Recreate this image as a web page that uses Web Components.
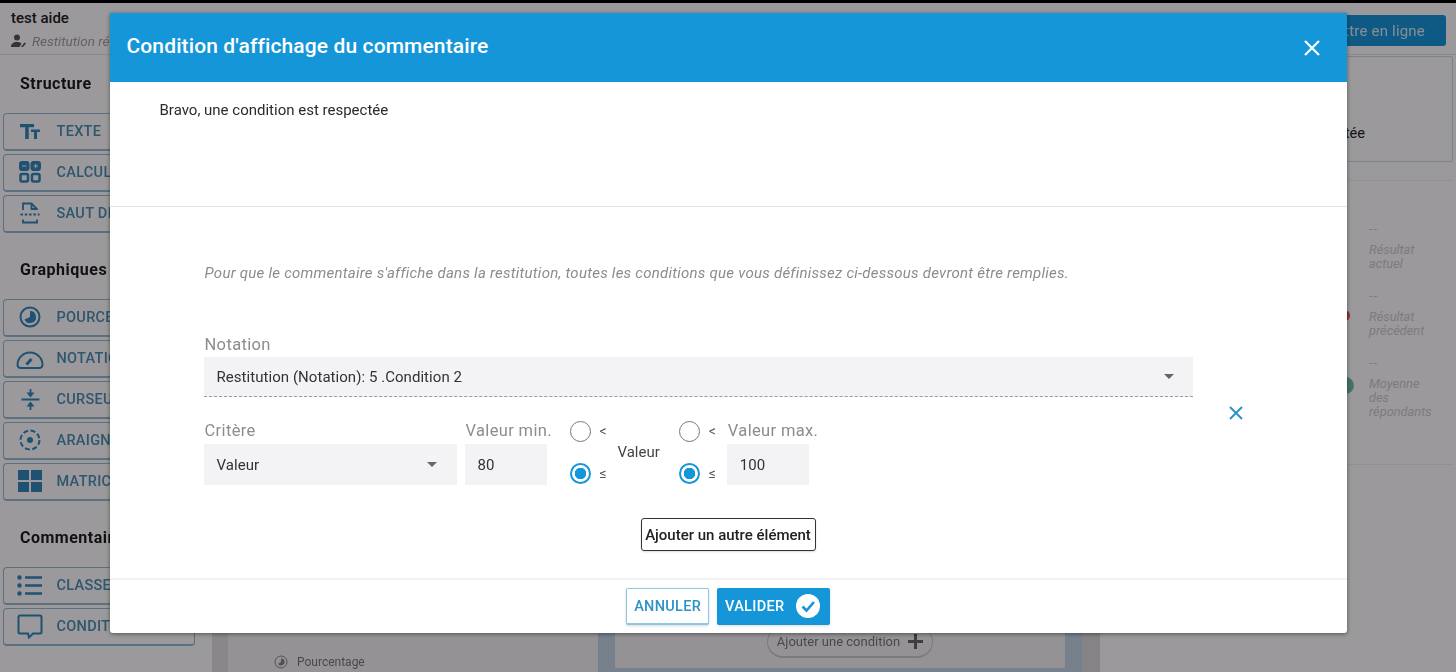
<!DOCTYPE html>
<html lang="fr">
<head>
<meta charset="utf-8">
<title>Condition d'affichage du commentaire</title>
<style>
  html, body { margin: 0; height: 100%; overflow: hidden; }
  body { font-family: Roboto, "Liberation Sans", sans-serif; color: #222; background: #fff; }
  svg[slot] { display: block; }
</style>
</head>
<body>

<app-shell>
  <app-header></app-header>
  <tool-sidebar slot="sidebar">
    <tool-group title="Structure">
      <tool-button label="TEXTE"><svg slot="icon" width="20" height="15" viewBox="0 0 20 15"><path fill="currentColor" d="M0 0h14v3.200H8.700V15H5.200V3.200H0zM11 5.500h9v2.500h-3v7h-3V8h-3z"/></svg></tool-button>
      <tool-button label="CALCUL"><svg slot="icon" width="22" height="22" viewBox="0 0 22 22" fill="none" stroke="currentColor"><rect x="0.500" y="0.500" width="9.500" height="9" rx="2" fill="currentColor"/><rect x="12" y="0.500" width="9.500" height="9" rx="2" fill="currentColor"/><rect x="1.500" y="13" width="7.500" height="7.500" rx="1.500" stroke-width="2.500"/><rect x="13" y="13" width="7.500" height="7.500" rx="1.500" stroke-width="2.500"/><path stroke="#fff" stroke-width="1" d="M3 5h4.500M14.500 5h4.500M16.700 2.700v4.600"/></svg></tool-button>
      <tool-button label="SAUT DE PAGE"><svg slot="icon" width="20" height="22" viewBox="0 0 20 22" fill="none" stroke="currentColor" stroke-width="1.800"><path d="M3 8V1.500h8.500L17 7v1M11.500 1.500V7H17M3 17.500v3h14v-3"/><path stroke-dasharray="2.500 1.800" d="M0.500 12.500h19"/></svg></tool-button>
    </tool-group>
    <tool-group title="Graphiques">
      <tool-button label="POURCENTAGE"><svg slot="icon" width="22" height="22" viewBox="0 0 22 22"><circle cx="11" cy="11" r="9.500" fill="none" stroke="currentColor" stroke-width="2"/><path fill="currentColor" d="M11 5a6 6 0 1 1-5.500 8.400L11 11z"/></svg></tool-button>
      <tool-button label="NOTATION"><svg slot="icon" width="28" height="21" viewBox="0 0 28 21" fill="none" stroke="currentColor" stroke-width="2"><path d="M5 20h18a3 3 0 0 0 3.500-3A12.500 12.500 0 1 0 1.500 17 3 3 0 0 0 5 20z"/><path stroke-width="3" d="M10.500 16.500l5-5.500"/></svg></tool-button>
      <tool-button label="CURSEUR"><svg slot="icon" width="19" height="21" viewBox="0 0 19 21"><path fill="none" stroke="currentColor" stroke-width="1.800" d="M0.500 10.500h18M9.500 0v7M9.500 14v7"/><path fill="currentColor" d="M5.500 3.500h8L9.500 8.500zM5.500 17.500h8l-4-5z"/></svg></tool-button>
      <tool-button label="ARAIGNEE"><svg slot="icon" width="22" height="22" viewBox="0 0 22 22" fill="none" stroke="currentColor"><circle cx="11" cy="11" r="9.500" stroke-width="2" stroke-dasharray="5 2.500"/><circle cx="11" cy="11" r="3" fill="currentColor" stroke="none"/></svg></tool-button>
      <tool-button label="MATRICE"><svg slot="icon" width="26" height="22" viewBox="0 0 26 22"><path fill="currentColor" d="M1 0h11v10H1zM14 0h11v10H14zM1 12h11v10H1zM14 12h11v10H14z"/></svg></tool-button>
    </tool-group>
    <tool-group title="Commentaires">
      <tool-button label="CLASSEMENT"><svg slot="icon" width="26" height="21" viewBox="0 0 26 21" fill="none" stroke="currentColor"><path stroke-width="2.500" d="M8 2.500h17M8 10.500h17M8 18.500h17"/><circle cx="2.500" cy="2.500" r="2.200" fill="currentColor" stroke="none"/><circle cx="2.500" cy="10.500" r="2.200" fill="currentColor" stroke="none"/><circle cx="2.500" cy="18.500" r="2.200" fill="currentColor" stroke="none"/></svg></tool-button>
      <tool-button label="CONDITION"><svg slot="icon" width="26" height="25" viewBox="0 0 26 25"><path fill="none" stroke="currentColor" stroke-width="2" d="M3 1.500h20a1.500 1.500 0 0 1 1.500 1.500v15a1.500 1.500 0 0 1-1.500 1.500h-7l-4 4-1-4H3A1.500 1.500 0 0 1 1.500 18V3A1.500 1.500 0 0 1 3 1.500z"/></svg></tool-button>
    </tool-group>
  </tool-sidebar>
  <editor-canvas slot="canvas"></editor-canvas>
  <preview-panel slot="preview"></preview-panel>
</app-shell>

<modal-backdrop>
  <condition-dialog heading="Condition d'affichage du commentaire">
    <span slot="message">Bravo, une condition est respectée</span>
    <condition-form slot="form"></condition-form>
  </condition-dialog>
</modal-backdrop>

<script>
'use strict';

const define = (name, css, html, setup) => {
  customElements.define(name, class extends HTMLElement {
    constructor() {
      super();
      const root = this.attachShadow({ mode: 'open' });
      root.innerHTML = `<style>${css}</style>${html}`;
      if (setup) setup(this, root);
    }
  });
};

const attr = (el, root, name, selector) => {
  root.querySelector(selector).textContent = el.getAttribute(name) || '';
};

define('app-shell', `
  :host { display: flex; flex-direction: column; height: 672px; overflow: hidden; border-top: 3px solid #000; box-sizing: border-box; filter: blur(.7px); }
  .main { flex: 1; display: grid; grid-template-columns: 212px 888px 356px; min-height: 0; }
`, `
  <slot></slot>
  <div class="main">
    <slot name="sidebar"></slot>
    <slot name="canvas"></slot>
    <slot name="preview"></slot>
  </div>
`);

define('app-header', `
  :host { display: flex; justify-content: space-between; height: 52px; box-sizing: border-box; padding: 6px 10px 0 11px; border-bottom: 1px solid #e6e4e6; background: #fff; }
  .name { font-size: 15px; font-weight: 500; line-height: 18px; color: #222; }
  .sub { display: flex; align-items: center; gap: 5px; margin-top: 6px; font-size: 13.500px; font-style: italic; color: #a3a1a3; white-space: nowrap; }
  .sub svg { color: #555; }
  .publish { align-self: flex-start; margin-top: 6px; width: 136px; height: 31px; box-sizing: border-box; padding-right: 21px; border-radius: 3px; background: #1496d9; color: #d8ecf6; font-size: 15px; line-height: 32px; text-align: right; letter-spacing: .2px; }
`, `
  <div>
    <div class="name">test aide</div>
    <div class="sub">
      <svg width="16" height="14" viewBox="0 0 16 14"><circle cx="6" cy="3.500" r="3" fill="currentColor"/><path fill="currentColor" d="M0 13c0-3.500 2.500-5 6-5 2 0 3.500.5 4.500 1.500L8.500 13zM10 13l3.500-4.500 1.500 1L12 13z"/></svg>
      <span>Restitution ré</span>
    </div>
  </div>
  <div class="publish">Mettre en ligne</div>
`);

define('tool-sidebar', `
  :host { display: flex; flex-direction: column; gap: 28px; padding: 20px 0 0 3px; background: #fff; }
`, `<slot></slot>`);

define('tool-group', `
  :host { display: block; }
  .title { margin: 0 0 20px 17px; font-size: 16px; font-weight: 700; line-height: 18px; color: #1c1c1c; letter-spacing: .5px; white-space: nowrap; }
  .list { display: flex; flex-direction: column; gap: 3px; }
`, `
  <div class="title"></div>
  <div class="list"><slot></slot></div>
`, (el, root) => attr(el, root, 'title', '.title'));

define('tool-button', `
  :host { display: flex; align-items: center; width: 192px; height: 38px; box-sizing: border-box; padding-bottom: 1px; border: 1.500px solid #97bcd2; border-bottom-width: 2.500px; border-radius: 4px; color: #2f88bb; }
  .icon { flex: 0 0 52.500px; display: flex; justify-content: center; box-sizing: border-box; }
  .label { font-size: 14.500px; font-weight: 500; letter-spacing: .3px; color: #4a90b6; white-space: nowrap; }
`, `
  <div class="icon"><slot name="icon"></slot></div>
  <div class="label"></div>
`, (el, root) => attr(el, root, 'label', '.label'));

define('editor-canvas', `
  :host { display: grid; grid-template-columns: 16px 370px 17px 450px 17px 18px; background: #f0eef0; }
  .gutter { background: #e3e1e3; }
  .dark { background: #dcdadc; }
  .blue { background: #c4d8e8; }
  .left { background: #f6f4f6; display: flex; flex-direction: column; justify-content: flex-end; padding: 0 0 2px 46px; font-size: 12px; color: #777; }
  .item { display: flex; align-items: center; gap: 9px; height: 16px; }
  .item svg { color: #888; }
  .right { display: flex; flex-direction: column; background: #c4d8e8; }
  .right .card { flex: 1; background: #f6f4f6; display: flex; justify-content: center; align-items: flex-end; padding: 0 0 10px 20px; }
  .right .edge { height: 4px; }
  .pill { display: flex; align-items: center; gap: 8px; box-sizing: border-box; width: 166px; height: 32px; justify-content: center; border: 1px solid #ccc; border-bottom-width: 2px; border-radius: 16px; font-size: 13px; color: #777; background: #f6f4f6; white-space: nowrap; }
  .pill svg { color: #666; }
`, `
  <div class="gutter"></div>
  <div class="left">
    <div class="item">
      <svg width="14" height="14" viewBox="0 0 14 14"><circle cx="7" cy="7" r="6" fill="none" stroke="currentColor"/><path fill="currentColor" d="M7 3.500a3.500 3.500 0 1 1-3 5.200L7 7z"/></svg>
      <span>Pourcentage</span>
    </div>
  </div>
  <div class="blue"></div>
  <div class="right">
    <div class="card">
      <div class="pill"><span>Ajouter une condition</span>
        <svg width="15" height="15" viewBox="0 0 15 15"><path fill="none" stroke="currentColor" stroke-width="3" d="M7.500 0v15M0 7.500h15"/></svg>
      </div>
    </div>
    <div class="edge"></div>
  </div>
  <div class="blue"></div>
  <div class="dark"></div>
`);

define('preview-panel', `
  :host { display: flex; flex-direction: column; background: #fff; padding: 1px 3px 0 0; }
  .card { height: 106px; box-sizing: border-box; border: 1.500px solid #c9dcea; border-radius: 2px; display: flex; align-items: center; justify-content: flex-end; padding: 48px 87px 0 0; font-size: 14.500px; color: #222; }
  .legend { margin-top: 18px; padding: 41px 0 0 0; border-top: 1px solid #f2f0f2; height: 285px; box-sizing: border-box; display: flex; flex-direction: column; gap: 18px; border-bottom: 1px solid #f2f0f2; }
`, `
  <div class="card">Condition respectée</div>
  <div class="legend">
    <legend-row>Résultat actuel</legend-row>
    <legend-row dot="#ef5350" size="11" top="21">Résultat précédent</legend-row>
    <legend-row dot="#6fc0a8" size="17" top="21">Moyenne des répondants</legend-row>
  </div>
`);

define('legend-row', `
  :host { display: grid; grid-template-columns: 269px 70px; font-size: 12.800px; font-style: italic; line-height: 14px; color: #cfcdcf; }
  .mark { display: flex; justify-content: flex-end; align-items: flex-start; padding-right: 19px; box-sizing: border-box; }
  .dot { border-radius: 50%; }
  .dash { font-style: normal; margin-bottom: 7px; letter-spacing: 1px; }
`, `
  <div class="mark"><div class="dot"></div></div>
  <div>
    <div class="dash">--</div>
    <div class="text"><slot></slot></div>
  </div>
`, (el, root) => {
  const dot = root.querySelector('.dot');
  const size = (el.getAttribute('size') || 0) + 'px';
  dot.style.background = el.getAttribute('dot') || 'transparent';
  dot.style.width = size;
  dot.style.height = size;
  dot.style.marginTop = (el.getAttribute('top') || 0) + 'px';
  dot.style.marginRight = (parseInt(size) > 11 ? -4 : 0) + 'px';
});

define('modal-backdrop', `
  :host { position: fixed; inset: 0; display: flex; justify-content: center; align-items: flex-start; padding-top: 13px; box-sizing: border-box; background: rgba(5, 0, 5, .4); }
`, `<slot></slot>`);

define('condition-dialog', `
  :host { display: flex; flex-direction: column; width: 1237px; height: 620px; border-radius: 0 0 3px 3px; background: #fff; box-shadow: 0 1px 4px rgba(0,0,0,.45); overflow: hidden; }
  header { flex: 0 0 69px; display: flex; align-items: center; justify-content: space-between; padding: 0 26px 0 17px; background: #1496d9; color: #fff; }
  h1 { margin: 0 0 4px; font-size: 21px; font-weight: 500; letter-spacing: .12px; }
  .close { display: flex; }
  .message { flex: 0 0 125px; box-sizing: border-box; padding: 20px 50px; font-size: 15px; line-height: 17px; color: #2b2b2b; border-bottom: 1px solid #e4e4e4; }
  .body { flex: 1; min-height: 0; }
  footer { flex: 0 0 55px; display: flex; justify-content: center; align-items: flex-start; gap: 8px; padding-top: 8px; box-sizing: border-box; border-top: 2px solid #f1f1f1; }
`, `
  <header>
    <h1></h1>
    <span class="close"><svg width="18" height="18" viewBox="0 0 18 18"><path fill="none" stroke="#fff" stroke-width="2.200" d="M2 2l14 14M16 2L2 16"/></svg></span>
  </header>
  <div class="message"><slot name="message"></slot></div>
  <div class="body"><slot name="form"></slot></div>
  <footer>
    <action-button>ANNULER</action-button>
    <action-button primary>VALIDER
      <svg slot="icon" width="24" height="24" viewBox="0 0 24 24"><circle cx="12" cy="12" r="12" fill="#fff"/><path fill="none" stroke="#1496d9" stroke-width="2.600" d="M6.500 12.500l4 4 7.500-8.500"/></svg>
    </action-button>
  </footer>
`, (el, root) => attr(el, root, 'heading', 'h1'));

define('action-button', `
  :host { display: inline-flex; align-items: center; height: 37px; box-sizing: border-box; padding: 0 7px; border: 1.500px solid #8cc7e3; border-bottom-width: 2px; border-radius: 2px; font-size: 14.500px; font-weight: 500; letter-spacing: .3px; color: #2b93c6; background: #fff; box-shadow: 0 1px 3px rgba(0,0,0,.15); }
  :host([primary]) { background: #1496d9; border-color: #1496d9; color: #fff; gap: 12px; padding: 0 8.500px 0 7px; }
`, `<slot></slot><slot name="icon"></slot>`);

define('condition-form', `
  :host { display: block; padding: 57px 0 0 94px; }
  .hint { margin: 1px 0 0 1px; font-size: 15px; font-style: italic; line-height: 16px; color: #8c8c8c; letter-spacing: .25px; white-space: nowrap; }
  .wrap { display: grid; grid-template-columns: 989px auto; margin-top: 54px; }
  .fields { display: flex; flex-direction: column; gap: 24px; }
  .remove { align-self: center; margin: 5px 0 0 35px; display: flex; }
  .row { display: flex; align-items: stretch; }
  .min { margin-left: 8px; }
  .mid { align-self: center; margin: 0 19px 2px 2px; font-size: 15px; color: #444; }
  .add { display: flex; justify-content: center; margin: 33px 0 0 -94px; }
  .add span { display: block; box-sizing: border-box; height: 33px; width: 175px; border: 1px solid #333; border-bottom-width: 1.500px; border-radius: 3px; font-size: 15px; font-weight: 500; line-height: 32px; text-align: center; color: #222; white-space: nowrap; box-shadow: 0 1px 2px rgba(0,0,0,.15); }
  .r1 { margin: -1px 0 0 23px; }
  .r2 { margin-top: -1px; }
  .max { margin-left: 2px; }
`, `
  <div class="hint">Pour que le commentaire s'affiche dans la restitution, toutes les conditions que vous définissez ci-dessous devront être remplies.</div>
  <div class="wrap">
    <div class="fields">
      <form-field label="Notation" value="Restitution (Notation): 5 .Condition 2" width="989" height="40" select dashed></form-field>
      <div class="row">
        <form-field label="Critère" value="Valeur" width="253" height="41" select></form-field>
        <form-field class="min" label="Valeur min." value="80" width="82" height="41"></form-field>
        <radio-pair class="r1"></radio-pair>
        <span class="mid">Valeur</span>
        <radio-pair class="r2"></radio-pair>
        <form-field class="max" label="Valeur max." value="100" width="82" height="41"></form-field>
      </div>
    </div>
    <span class="remove"><svg width="16" height="16" viewBox="0 0 16 16"><path fill="none" stroke="#2b93c6" stroke-width="2" d="M2 2l12 12M14 2L2 14"/></svg></span>
  </div>
  <div class="add"><span>Ajouter un autre élément</span></div>
`);

define('form-field', `
  :host { display: block; flex: none; }
  .label { font-size: 16.500px; line-height: 18px; padding: 1px 0 0 1px; margin-bottom: 4px; color: #8d8d8d; letter-spacing: .35px; white-space: nowrap; }
  .box { display: flex; align-items: center; justify-content: space-between; box-sizing: border-box; padding: 0 13px; background: #f3f2f4; font-size: 15px; color: #333; letter-spacing: .05px; }
  .caret { width: 0; height: 0; border: 5px solid transparent; border-top-color: #666; border-bottom-width: 0; margin-right: 7px; }
  :host([dashed]) .box { border-bottom: 1px dashed #9a9a9a; }
  :host([dashed]) .label { margin-bottom: 3px; }
  :host([dashed]) .caret { margin-right: 6px; }
`, `
  <div class="label"></div>
  <div class="box"><span class="value"></span><span class="caret"></span></div>
`, (el, root) => {
  attr(el, root, 'label', '.label');
  attr(el, root, 'value', '.value');
  el.style.width = el.getAttribute('width') + 'px';
  root.querySelector('.box').style.height = el.getAttribute('height') + 'px';
  if (!el.hasAttribute('select')) root.querySelector('.caret').remove();
});

define('radio-pair', `
  :host { display: flex; flex-direction: column; justify-content: space-between; height: 64px; padding-right: 6px; box-sizing: border-box; }
  .opt { display: flex; align-items: center; gap: 9px; height: 22px; font-size: 14px; color: #555; }
  .dot { width: 21px; height: 21px; box-sizing: border-box; border: 1.600px solid #777; border-radius: 50%; }
  .on .dot { border: 2px solid #1496d9; background: radial-gradient(circle, #1496d9 0 5.500px, #fff 6px); }
  .opt span { width: 10px; }
`, `
  <div class="opt"><div class="dot"></div><span>&lt;</span></div>
  <div class="opt on"><div class="dot"></div><span>≤</span></div>
`);
</script>
</body>
</html>
